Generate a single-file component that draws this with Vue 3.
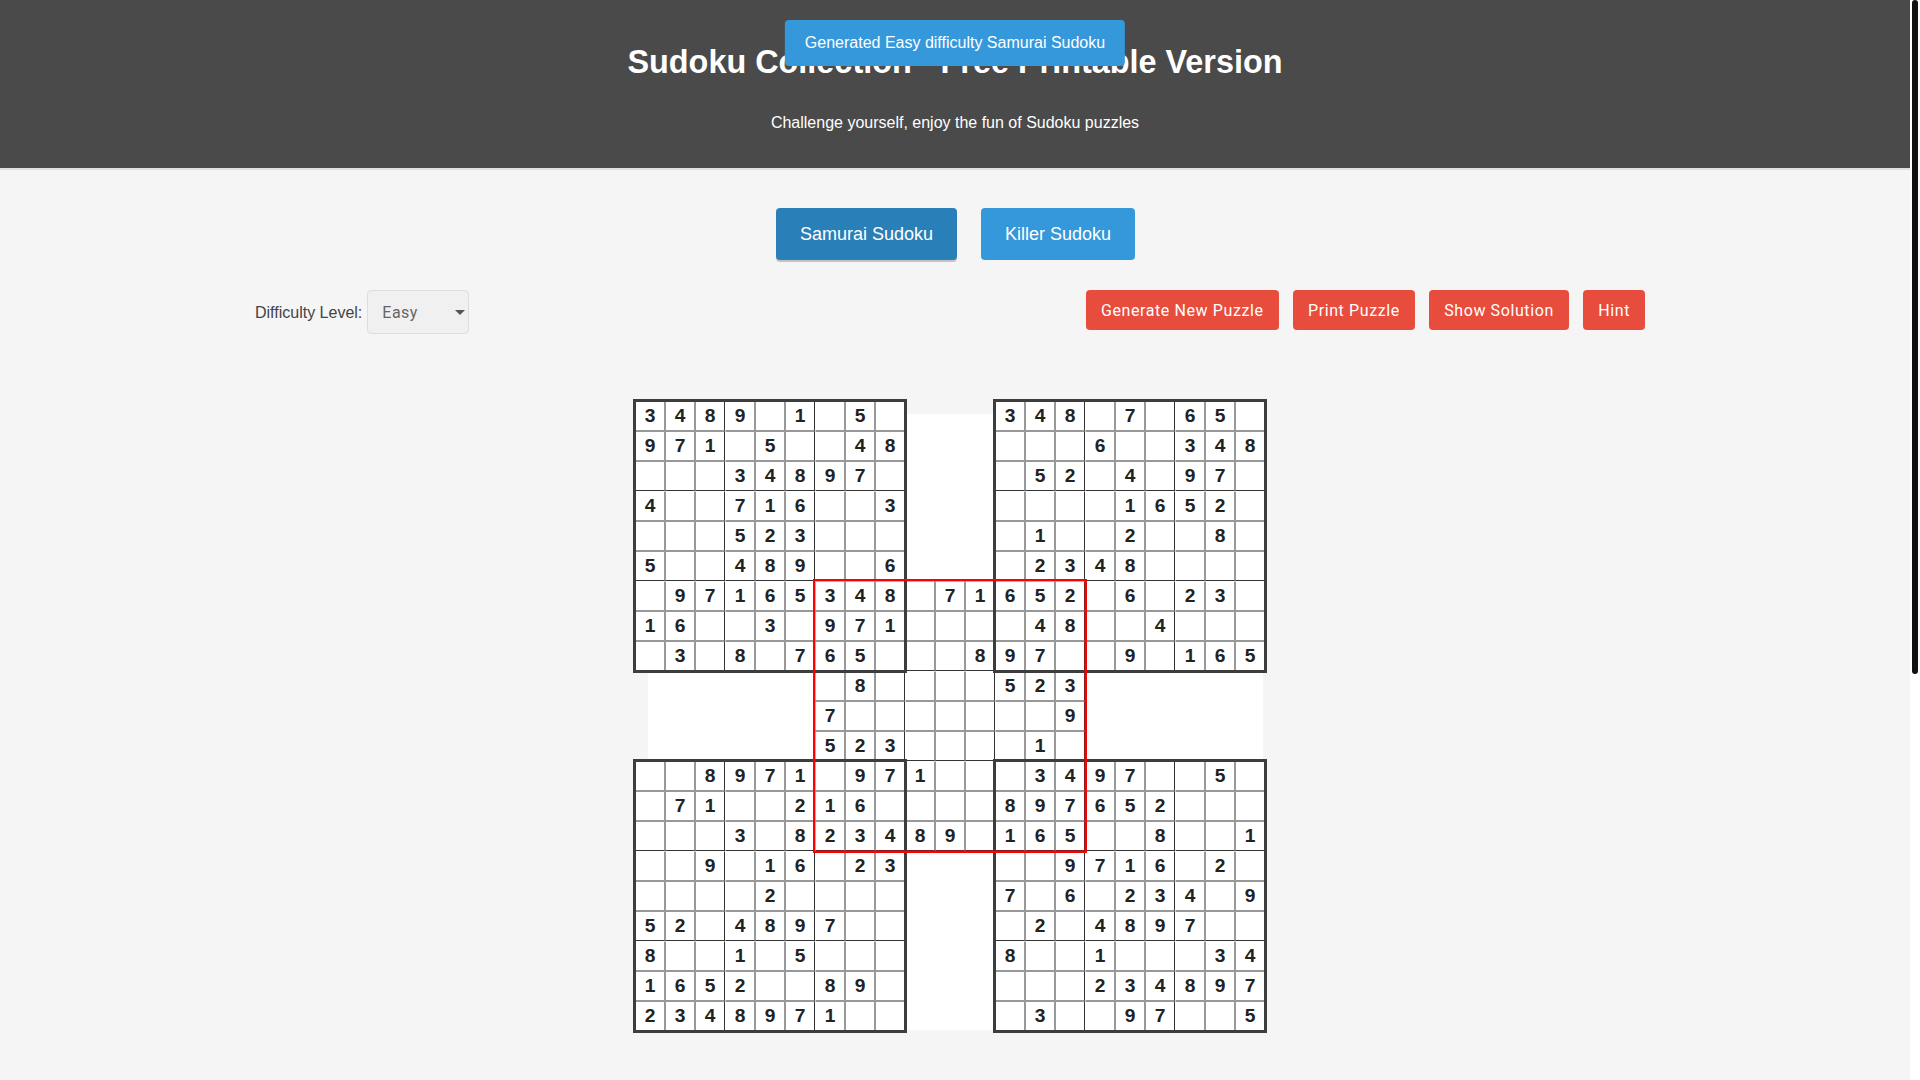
<script setup>
const rows = [
  '3489.1.5.' + '...' + '348.7.65.',
  '971.5..48' + '...' + '...6..348',
  '...34897.' + '...' + '.52.4.97.',
  '4..716..3' + '...' + '....1652.',
  '...523...' + '...' + '.1..2..8.',
  '5..489..6' + '...' + '.2348....',
  '.97165348' + '.71' + '652.6.23.',
  '16..3.971' + '...' + '.48..4...',
  '.3.8.765.' + '..8' + '97..9.165',
  '.......8.' + '...' + '523......',
  '......7..' + '...' + '..9......',
  '......523' + '...' + '.1.......',
  '..8971.97' + '1..' + '.3497..5.',
  '.71..216.' + '...' + '897652...',
  '...3.8234' + '89.' + '165..8..1',
  '..9.16.23' + '...' + '..9716.2.',
  '....2....' + '...' + '7.6.234.9',
  '52.4897..' + '...' + '.2.4897..',
  '8..1.5...' + '...' + '8..1...34',
  '1652..89.' + '...' + '...234897',
  '2348971..' + '...' + '.3..97..5',
]

const exists = (r, c) =>
  (r < 9 && c < 9) ||
  (r < 9 && c >= 12) ||
  (r >= 12 && c < 9) ||
  (r >= 12 && c >= 12) ||
  (r >= 6 && r < 15 && c >= 6 && c < 15)

const cells = []
rows.forEach((row, r) => {
  ;[...row].forEach((ch, c) => {
    if (!exists(r, c)) return
    cells.push({
      key: r + '-' + c,
      value: ch === '.' ? '' : ch,
      area: `${r + 1} / ${c + 1}`,
      cls: {
        'edge-r': (c + 1) % 3 === 0,
        'edge-l': c % 3 === 0,
        'edge-b': (r + 1) % 3 === 0,
        'edge-t': r % 3 === 0,
      },
    })
  })
})

const actions = ['Generate New Puzzle', 'Print Puzzle', 'Show Solution', 'Hint']
</script>

<template>
  <div class="page">
    <div class="toast">Generated Easy difficulty Samurai Sudoku</div>
    <header class="header">
      <h1>Sudoku Collection - Free Printable Version</h1>
      <p>Challenge yourself, enjoy the fun of Sudoku puzzles</p>
    </header>
    <main class="main">
      <nav class="tabs">
        <button class="tab active">Samurai Sudoku</button>
        <button class="tab">Killer Sudoku</button>
      </nav>
      <section class="controls">
        <div class="difficulty">
          <label for="level">Difficulty Level:</label>
          <div class="select-wrap">
            <select id="level">
              <option>Easy</option>
              <option>Medium</option>
              <option>Hard</option>
            </select>
            <svg class="arrow" width="10" height="5" viewBox="0 0 10 5"><path d="M0 0h10L5 5z" fill="#555" /></svg>
          </div>
        </div>
        <div class="actions">
          <button v-for="a in actions" :key="a" class="action">{{ a }}</button>
        </div>
      </section>
      <div class="board-wrap">
        <div class="board">
          <div class="paper"></div>
          <div
            v-for="cell in cells"
            :key="cell.key"
            class="cell"
            :class="cell.cls"
            :style="{ gridArea: cell.area }"
          >{{ cell.value }}</div>
          <div class="frame tl"></div>
          <div class="frame tr"></div>
          <div class="frame bl"></div>
          <div class="frame br"></div>
          <div class="center-frame"></div>
        </div>
      </div>
    </main>
    <div class="scrollbar"><div class="thumb"></div></div>
  </div>
</template>

<style scoped>
.page {
  width: 1910px;
  min-height: 1730px;
  background: #f5f5f5;
  font-family: "Liberation Sans", Arial, sans-serif;
  color: #333;
}
.scrollbar {
  position: fixed;
  top: 0;
  right: 0;
  bottom: 0;
  width: 10px;
  background: #fff;
}
.thumb {
  width: 6px;
  height: 674px;
  margin-left: 2px;
  border-radius: 3px;
  background: #111;
}
.toast {
  position: fixed;
  top: 20px;
  left: 955px;
  transform: translateX(-50%);
  height: 46px;
  padding: 0 20px;
  box-sizing: border-box;
  display: flex;
  align-items: center;
  background: #3498db;
  color: #fff;
  font-size: 16px;
  white-space: nowrap;
  border-radius: 4px;
  z-index: 10;
}
.header {
  height: 168px;
  border-bottom: 2px solid #e0e0e0;
  background: #4a4a4a;
  color: #fff;
  text-align: center;
  display: flow-root;
}
.header h1 {
  margin: 43px 0 0;
  font-size: 32.4px;
  line-height: 38px;
  font-weight: 700;
}
.header p {
  margin: 33px 0 0;
  font-size: 16px;
  line-height: 18px;
}
.main {
  padding-top: 38px;
}
.tabs {
  display: flex;
  justify-content: center;
  gap: 24px;
  padding-left: 1px;
}
.tab {
  height: 52px;
  padding: 0 24px;
  border: 0;
  border-radius: 4px;
  background: #3498db;
  color: #fff;
  font-family: "Liberation Sans", Arial, sans-serif;
  font-size: 18px;
}
.tab.active {
  background: #2980b9;
  box-shadow: 0 2px 0 rgba(0, 0, 0, 0.2);
}
.controls {
  width: 1400px;
  margin: 30px auto 0;
  display: flex;
  justify-content: space-between;
  align-items: flex-start;
}
.difficulty {
  display: flex;
  align-items: center;
  gap: 5px;
  font-size: 16px;
  color: #444;
}
.difficulty label {
  padding-top: 1px;
}
.select-wrap {
  position: relative;
  display: flex;
}
.select-wrap select {
  appearance: none;
  width: 102px;
  height: 44px;
  padding: 0 14px;
  border: 1px solid #ddd;
  border-radius: 4px;
  background: #f0f0f0;
  color: #666;
  font-family: Roboto, sans-serif;
  font-size: 16px;
  letter-spacing: 0.5px;
}
.arrow {
  position: absolute;
  right: 4px;
  top: 20px;
}
.actions {
  display: flex;
  gap: 14.4px;
  padding-right: 10px;
}
.action {
  height: 40px;
  padding: 0 15px;
  border: 0;
  border-radius: 4px;
  background: #e74c3c;
  color: #fff;
  font-family: Roboto, sans-serif;
  font-size: 16px;
  letter-spacing: 0.6px;
}
.board-wrap {
  display: flex;
  justify-content: center;
  padding: 67px 10px 0 0;
}
.board {
  display: grid;
  grid-template-columns: repeat(21, 30px);
  grid-template-rows: repeat(21, 30px);
}
.paper {
  grid-area: 1 / 1 / 22 / 22;
  margin: 13px 2px 1px 13px;
  background: #fff;
}
.cell {
  box-sizing: border-box;
  display: flex;
  align-items: center;
  justify-content: center;
  border: 1px solid #999;
  background: #fff;
  color: #222;
  font-size: 19.2px;
  font-weight: 700;
}
.cell.edge-r { border-right-color: #333; }
.cell.edge-l { border-left-color: transparent; }
.cell.edge-b { border-bottom-color: #333; }
.cell.edge-t { border-top-color: transparent; }
.frame {
  margin: -2px;
  border: 3px solid #3d3d3d;
  pointer-events: none;
}
.tl { grid-area: 1 / 1 / 10 / 10; }
.tr { grid-area: 1 / 13 / 10 / 22; }
.bl { grid-area: 13 / 1 / 22 / 10; }
.br { grid-area: 13 / 13 / 22 / 22; }
.center-frame {
  grid-area: 7 / 7 / 16 / 16;
  margin: -2px;
  border: 2px solid #f00;
  box-shadow: inset 0 0 0 1px rgba(255, 0, 0, 0.4);
  pointer-events: none;
}
</style>
